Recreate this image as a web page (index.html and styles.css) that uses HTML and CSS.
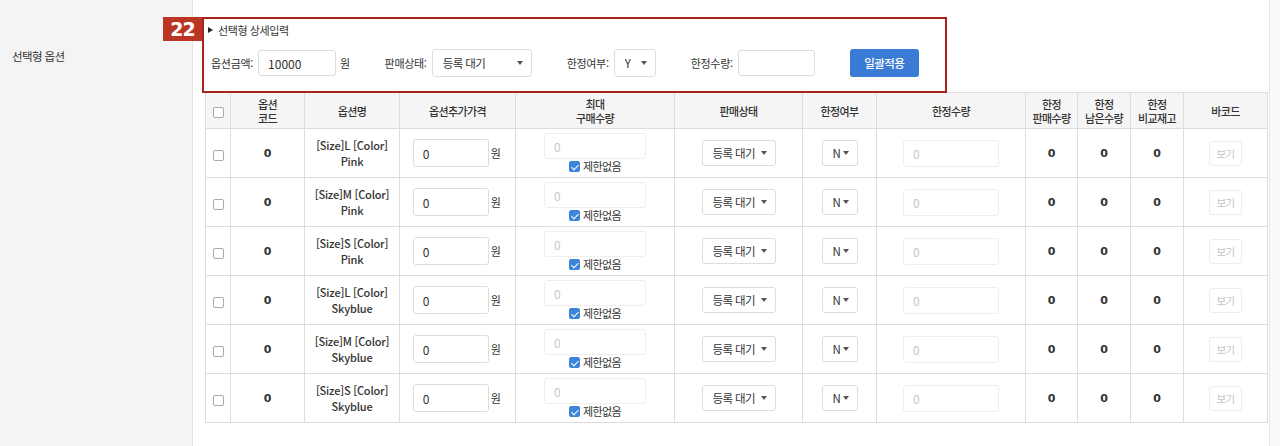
FILE: index.html
```html
<!DOCTYPE html>
<html lang="ko">
<head>
  <meta charset="UTF-8">
  <meta name="viewport" content="width=device-width, initial-scale=1.0">
  <title>선택형 옵션</title>
  <link rel="stylesheet" href="styles.css">
</head>
<body>
  <div class="page">
    <div class="label-col">선택형 옵션</div>

    <div class="content-col">
      <div class="detail-box">
        <span class="badge">22</span>
        <div class="detail-title"><span class="tri"></span>선택형 상세입력</div>
        <div class="detail-form">
          <div class="field">
            <span class="field-label">옵션금액:</span>
            <input class="input amount" type="text" value="10000">
            <span class="unit">원</span>
          </div>
          <div class="field">
            <span class="field-label">판매상태:</span>
            <span class="select">
              <select class="status-lg">
                <option>등록 대기</option>
              </select>
            </span>
          </div>
          <div class="field">
            <span class="field-label">한정여부:</span>
            <span class="select">
              <select class="yn-lg">
                <option>Y</option>
                <option>N</option>
              </select>
            </span>
          </div>
          <div class="field">
            <span class="field-label">한정수량:</span>
            <input class="input limit-lg" type="text">
          </div>
          <button class="btn-primary">일괄적용</button>
        </div>
      </div>

      <table class="option-table">
        <colgroup>
          <col style="width:25px"><col style="width:74px"><col style="width:95px">
          <col style="width:116px"><col style="width:159px"><col style="width:128px">
          <col style="width:74px"><col style="width:149px"><col style="width:52px">
          <col style="width:53px"><col style="width:53px"><col style="width:84px">
        </colgroup>
        <thead>
          <tr>
            <th><span class="check"></span></th>
            <th>옵션<br>코드</th>
            <th>옵션명</th>
            <th>옵션추가가격</th>
            <th>최대<br>구매수량</th>
            <th>판매상태</th>
            <th>한정여부</th>
            <th>한정수량</th>
            <th>한정<br>판매수량</th>
            <th>한정<br>남은수량</th>
            <th>한정<br>비교재고</th>
            <th>바코드</th>
          </tr>
        </thead>
        <tbody id="optionBody"></tbody>
      </table>
    </div>
  </div>

  <script>
    const options = [
      { size: 'L', color: 'Pink' },
      { size: 'M', color: 'Pink' },
      { size: 'S', color: 'Pink' },
      { size: 'L', color: 'Skyblue' },
      { size: 'M', color: 'Skyblue' },
      { size: 'S', color: 'Skyblue' }
    ];

    document.getElementById('optionBody').innerHTML = options.map(item => `
      <tr>
        <td><span class="check"></span></td>
        <td class="num">0</td>
        <td class="name">[Size]${item.size} [Color]<br>${item.color}</td>
        <td>
          <div class="price-cell">
            <input class="input price" type="text" value="0">
            <span class="unit">원</span>
          </div>
        </td>
        <td>
          <div class="max-cell">
            <input class="input disabled max" type="text" placeholder="0" disabled>
            <span class="no-limit"><span class="check checked"></span>제한없음</span>
          </div>
        </td>
        <td>
          <span class="select">
            <select class="status-sm"><option>등록 대기</option></select>
          </span>
        </td>
        <td>
          <span class="select">
            <select class="yn-sm"><option>N</option><option>Y</option></select>
          </span>
        </td>
        <td><input class="input disabled limit" type="text" placeholder="0" disabled></td>
        <td class="num">0</td>
        <td class="num">0</td>
        <td class="num">0</td>
        <td><button class="btn-view" disabled>보기</button></td>
      </tr>
    `).join('');
  </script>
</body>
</html>
```

FILE: styles.css
```css
:root {
  --text: #333;
  --border: #dddddd;
  --head-bg: #f5f5f5;
  --side-bg: #f4f4f4;
  --accent: #3a7bd5;
  --mark: #a8231d;
}

* {
  box-sizing: border-box;
}

body {
  margin: 0;
  font-family: "Noto Sans CJK KR", "Noto Sans", sans-serif;
  font-size: 11px;
  letter-spacing: -0.6px;
  color: var(--text);
  background: #fafafa;
}

.page {
  display: flex;
  width: 1270px;
  min-height: 446px;
  background: #fff;
  border-right: 1px solid #e4e4e4;
}

.label-col {
  width: 193px;
  flex-shrink: 0;
  background: var(--side-bg);
  border-right: 1px solid #e3e3e3;
  padding: 48px 0 0 12px;
  font-size: 11.5px;
}

.content-col {
  flex: 1;
  padding: 17px 0 0 12px;
}

/* detail input box */
.detail-box {
  position: relative;
  z-index: 1;
  width: 745px;
  height: 76px;
  margin-left: -3px;
  margin-bottom: -1px;
  border: 2px solid var(--mark);
  background: #fff;
}

.badge {
  position: absolute;
  left: -41px;
  top: -2px;
  width: 39px;
  height: 24px;
  background: #bb3524;
  color: #fff;
  font-family: "DejaVu Sans", sans-serif;
  font-weight: 700;
  font-size: 19px;
  line-height: 24px;
  letter-spacing: -1px;
  text-align: center;
}

.detail-title {
  display: flex;
  align-items: center;
  height: 16px;
  margin-top: 3px;
  padding-left: 4px;
  letter-spacing: -0.4px;
}

.tri {
  width: 0;
  height: 0;
  border-top: 3.5px solid transparent;
  border-bottom: 3.5px solid transparent;
  border-left: 5px solid #222;
  margin-right: 5px;
}

.detail-form {
  display: flex;
  align-items: center;
  height: 28px;
  margin-top: 11px;
  padding-left: 7px;
}

.field {
  display: flex;
  align-items: center;
  gap: 5px;
  margin-right: 35px;
}

.field-label {
  letter-spacing: -0.3px;
}

.unit {
  margin-left: -1px;
}

.input {
  height: 26px;
  border: 1px solid var(--border);
  border-radius: 3px;
  padding: 0 9px;
  font-family: inherit;
  font-size: 12px;
  color: var(--text);
  background: #fff;
  outline: none;
}

.input.amount { width: 78px; }
.input.limit-lg { width: 77px; }

.input.disabled {
  border-color: #eeeeee;
  background: #fff;
}

.input.disabled::placeholder {
  color: #c8c8c8;
}

.select {
  position: relative;
  display: inline-block;
}

.select::after {
  content: '';
  position: absolute;
  top: 50%;
  right: 9px;
  margin-top: -2px;
  border-left: 3.5px solid transparent;
  border-right: 3.5px solid transparent;
  border-top: 4px solid #555;
  pointer-events: none;
}

select {
  appearance: none;
  -webkit-appearance: none;
  height: 26px;
  border: 1px solid var(--border);
  border-radius: 3px;
  background: #fff;
  font-family: inherit;
  font-size: 11.5px;
  letter-spacing: -0.6px;
  color: var(--text);
  padding: 0 0 0 10px;
  outline: none;
}

.status-lg { width: 100px; height: 28px; }
.yn-lg { width: 42px; height: 28px; }
.status-sm { width: 74px; }
.yn-sm { width: 36px; padding-left: 10px; }

.btn-primary {
  height: 28px;
  width: 69px;
  border: none;
  border-radius: 3px;
  background: var(--accent);
  color: #fff;
  font-family: inherit;
  font-size: 11.5px;
  font-weight: 500;
  letter-spacing: -0.6px;
}

/* option table */
.option-table {
  width: 1062px;
  table-layout: fixed;
  border-collapse: collapse;
}

.option-table th,
.option-table td {
  border: 1px solid var(--border);
  text-align: center;
  vertical-align: middle;
  padding: 0;
}

.option-table th {
  height: 36px;
  background: var(--head-bg);
  font-weight: 500;
  line-height: 14px;
}

.option-table td {
  height: 49px;
}

.check {
  display: inline-block;
  width: 11px;
  height: 11px;
  border: 1px solid #aaa;
  border-radius: 2px;
  background: #fff;
  vertical-align: middle;
}

.check.checked {
  position: relative;
  border-color: #3d85d8;
  background: #3d85d8;
  margin-right: 3px;
}

.check.checked::after {
  content: '';
  position: absolute;
  left: 3px;
  top: 1px;
  width: 3px;
  height: 6px;
  border-right: 1.5px solid #fff;
  border-bottom: 1.5px solid #fff;
  transform: rotate(45deg);
}

.num {
  font-family: "DejaVu Sans", sans-serif;
  font-weight: 700;
  font-size: 11px;
  letter-spacing: 0;
}

.name {
  font-weight: 500;
  line-height: 16px;
  letter-spacing: -0.2px;
}

.price-cell {
  display: flex;
  align-items: center;
  justify-content: center;
  gap: 3px;
  padding-right: 2px;
}

.input.price { width: 76px; height: 28px; }

.max-cell {
  display: flex;
  flex-direction: column;
  align-items: center;
  gap: 1px;
}

.input.max { width: 102px; height: 26px; }

.no-limit {
  display: flex;
  align-items: center;
  line-height: 13px;
}

.input.limit { width: 96px; height: 27px; }

.btn-view {
  width: 33px;
  height: 25px;
  border: 1px solid #ececec;
  border-radius: 3px;
  background: #fff;
  color: #c4c4c4;
  font-family: inherit;
  font-size: 10.5px;
  letter-spacing: -0.6px;
  padding: 0;
}
```
